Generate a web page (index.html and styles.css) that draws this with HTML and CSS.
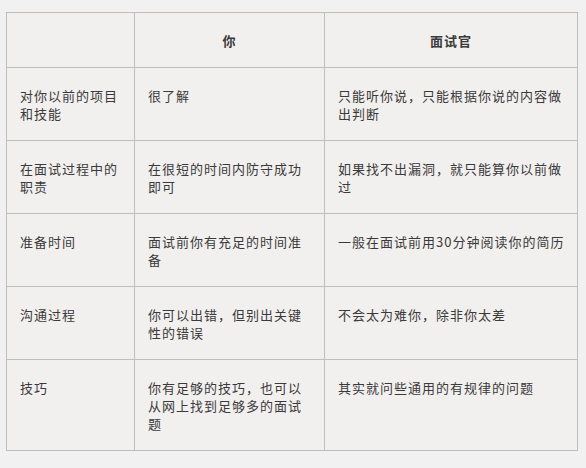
FILE: index.html
```html
<!DOCTYPE html>
<html lang="zh">
<head>
<meta charset="utf-8">
<link rel="stylesheet" href="styles.css">
</head>
<body>
<table class="cmp">
  <colgroup><col class="c1"><col class="c2"><col class="c3"></colgroup>
  <thead>
    <tr><th></th><th>你</th><th>面试官</th></tr>
  </thead>
  <tbody>
    <tr><td>对你以前的项目和技能</td><td>很了解</td><td class="wide">只能听你说，只能根据你说的内容做出判断</td></tr>
    <tr><td>在面试过程中的职责</td><td>在很短的时间内防守成功即可</td><td class="wide">如果找不出漏洞，就只能算你以前做过</td></tr>
    <tr><td>准备时间</td><td>面试前你有充足的时间准备</td><td class="wide">一般在面试前用30分钟阅读你的简历</td></tr>
    <tr><td>沟通过程</td><td>你可以出错，但别出关键性的错误</td><td class="wide">不会太为难你，除非你太差</td></tr>
    <tr class="last"><td>技巧</td><td>你有足够的技巧，也可以从网上找到足够多的面试题</td><td class="wide">其实就问些通用的有规律的问题</td></tr>
  </tbody>
</table>
</body>
</html>
```
FILE: styles.css
```css
html, body {
  margin: 0;
  padding: 0;
  background: #f1f1f1;
}
body {
  padding: 12px 0 0 6px;
  font-family: "Noto Sans CJK SC", "Liberation Sans", sans-serif;
  color: #3a3a3a;
}
.cmp {
  border-collapse: collapse;
  table-layout: fixed;
  width: 571px;
  background: #f2efef;
}
.c1 { width: 128px; }
.c2 { width: 190px; }
.c3 { width: 253px; }
.cmp th, .cmp td {
  border: 1px solid #bfbebe;
  padding: 19px 13px 17px 13px;
  font-size: 13px;
  line-height: 18px;
  letter-spacing: 1px;
  vertical-align: top;
  text-align: left;
  font-weight: normal;
}
.cmp td.wide { padding-right: 8px; }
.cmp th {
  text-align: center;
  font-weight: bold;
}
.cmp tbody td { height: 36px; }
.cmp tr.last td { height: 54px; }
```
